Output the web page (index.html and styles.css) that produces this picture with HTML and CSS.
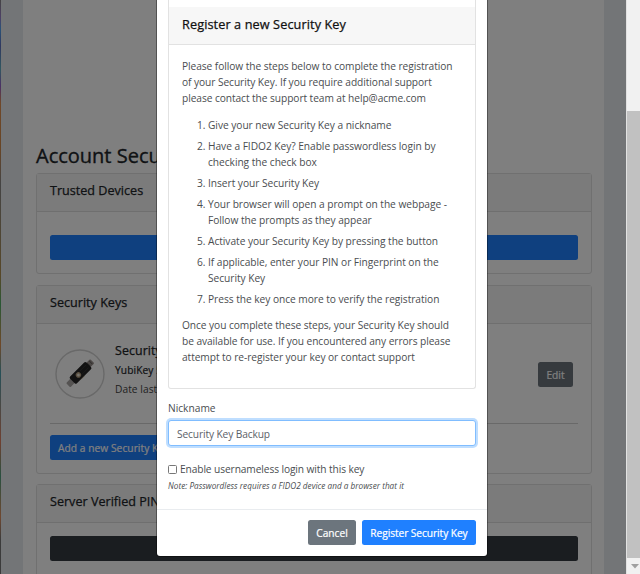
FILE: index.html
```html
<!DOCTYPE html>
<html lang="en">
<head>
<meta charset="utf-8">
<title>Account Security</title>
<link rel="stylesheet" href="styles.css">
</head>
<body>
<div class="window">
  <div class="desktop-edge"></div>
  <div class="page">
    <main class="content">
      <h1>Account Security</h1>
      <section class="card devices">
        <h2 class="card-header">Trusted Devices</h2>
        <div class="card-body"><div class="btn primary wide"></div></div>
      </section>
      <section class="card keys">
        <h2 class="card-header">Security Keys</h2>
        <div class="card-body">
          <div class="key-row">
            <svg class="key-image" viewBox="0 0 50 50">
              <circle cx="25" cy="25" r="24" fill="none" stroke="#d2d2d2" stroke-width="1.4"/>
              <g transform="translate(25.2 24.2) rotate(-45)">
                <rect x="-17" y="-3" width="7" height="6" rx="1" fill="#aaa6a4"/>
                <rect x="10" y="-3" width="7" height="6" rx="1" fill="#99908d"/>
                <path d="M12 -2v4M15 -2v4" stroke="#625e5c" stroke-width="1"/>
                <rect x="-11" y="-4.8" width="23" height="9.6" rx="1.6" fill="#242424"/>
                <path d="M1 -1.8H10M1 2H10" stroke="#393939" stroke-width=".8"/>
                <path d="M-4 4.8H1" stroke="#756345" stroke-width=".8"/>
                <circle cx="-2.5" cy="0" r="2.7" fill="#b6a183"/>
                <circle cx="-2.5" cy="0" r="1.4" fill="#eee9dc"/>
              </g>
            </svg>
            <div class="key-text">
              <h3>Security Key</h3>
              <p class="model">YubiKey 5Ci</p>
              <p class="date">Date last used</p>
            </div>
            <button class="btn secondary edit">Edit</button>
          </div>
          <hr>
          <button class="btn primary add">Add a new Security Key</button>
        </div>
      </section>
      <section class="card pin">
        <h2 class="card-header">Server Verified PIN</h2>
        <div class="card-body"><div class="btn dark wide"></div></div>
      </section>
    </main>
  </div>
  <div class="scrollbar">
    <div class="thumb"></div>
    <svg class="arrow" viewBox="0 0 13 16"><path d="M4 6h8l-4 4.5z" fill="#a0a0a0"/></svg>
  </div>
  <div class="backdrop">
    <div class="modal">
      <div class="modal-body">
        <section class="instructions">
          <h2 class="instructions-header">Register a new Security Key</h2>
          <div class="instructions-body">
            <p>Please follow the steps below to complete the registration<br>of your Security Key. If you require additional support<br>please contact the support team at help@acme.com</p>
            <ol>
              <li>Give your new Security Key a nickname</li>
              <li>Have a FIDO2 Key? Enable passwordless login by<br>checking the check box</li>
              <li>Insert your Security Key</li>
              <li>Your browser will open a prompt on the webpage -<br>Follow the prompts as they appear</li>
              <li>Activate your Security Key by pressing the button</li>
              <li>If applicable, enter your PIN or Fingerprint on the<br>Security Key</li>
              <li>Press the key once more to verify the registration</li>
            </ol>
            <p>Once you complete these steps, your Security Key should<br>be available for use. If you encountered any errors please<br>attempt to re-register your key or contact support</p>
          </div>
        </section>
        <label class="nickname" for="nick">Nickname</label>
        <input id="nick" class="field" type="text" value="Security Key Backup">
        <label class="check"><input type="checkbox"><span>Enable usernameless login with this key</span></label>
        <p class="note">Note: Passwordless requires a FIDO2 device and a browser that it</p>
      </div>
      <div class="modal-footer">
        <button class="btn secondary cancel">Cancel</button>
        <button class="btn primary register">Register Security Key</button>
      </div>
    </div>
  </div>
</div>
</body>
</html>
```
FILE: styles.css
```css
* { box-sizing: border-box; }
html, body { margin: 0; height: 574px; overflow: hidden; }
body { font: 10.2px/16px "Open Sans", "Noto Sans", sans-serif; color: #212529; }
h1, h2, h3, p, ol { margin: 0; font-weight: 400; white-space: nowrap; }
.window { position: relative; display: flex; width: 640px; height: 574px; overflow: hidden; background: #fff; }
.desktop-edge { width: 1px; background: linear-gradient(#888 0, #9a7fcc 3%, #53a4f0 5%, #6070c0 8%, #60b0c0 12%, #9660ca 15%, #e09050 18%, #d08a4a 26%, #888 32%, #b09050 48%, #50b06a 53%, #e09050 60%, #4ba0b0 65%, #e08060 77%, #50a080 83%, #e09060 90%, #777 94%); }
.page { width: 625px; padding: 0 22px; background: #e6eaee; }
.content { width: 581px; height: 574px; padding: 143px 12px 0 13px; background: #fff; overflow: hidden; }
h1 { height: 30px; font-size: 20px; line-height: 26px; -webkit-text-stroke: .35px; }
.card { border: 1px solid #e0e0e0; border-radius: 3px; }
.card-header { height: 38px; padding: 0 13px; border-bottom: 1px solid #dfdfdf; background: #f7f7f7; font-size: 12.6px; line-height: 34px; -webkit-text-stroke: .25px; }
.devices { height: 101px; margin-bottom: 11px; }
.keys { height: 189px; margin-bottom: 10px; }
.pin { height: 120px; }
.card-body { padding: 0 13px; }
.devices .card-body { padding-top: 23px; }
.pin .card-body { padding-top: 13px; }
.btn { display: block; height: 25px; border: 0; border-radius: 2.5px; padding: 0; font: 10.2px/26px "Open Sans", "Noto Sans", sans-serif; color: #fff; white-space: nowrap; -webkit-text-stroke: .2px; }
.primary { background: #1f80ff; }
.secondary { background: #6c757d; }
.dark { background: #343a40; }
.wide { width: 527.5px; }
.key-row { display: flex; height: 99px; padding-top: 17px; }
.key-image { width: 50px; height: 50px; margin: 8px 10px 0 5px; flex: none; }
.key-text { width: 350px; }
.key-text h3 { font-size: 12.4px; line-height: 20px; letter-spacing: .1px; -webkit-text-stroke: .25px; }
.model { line-height: 19px; letter-spacing: .1px; -webkit-text-stroke: .2px; }
.date { line-height: 19px; letter-spacing: .05px; color: #444; }
.edit { width: 35px; margin: 21px 5px 0 auto; }
hr { margin: 0; border: 0; border-top: 1px solid #d2d2d2; }
.add { width: 115px; margin-top: 11px; padding-left: 8px; text-align: left; letter-spacing: .06px; }
.scrollbar { width: 14px; padding-top: 111px; background: #f1f1f1; border-left: 1px solid #e2e2e2; }
.thumb { height: 447px; background: #c1c1c1; }
.arrow { display: block; width: 13px; height: 16px; }
.backdrop { position: absolute; left: 0; top: 0; width: 626px; height: 574px; padding: 0 139px 18px 157px; background: rgba(0, 0, 0, .5); }
.modal { width: 330px; height: 556px; background: #fff; border-radius: 0 0 3px 3px; box-shadow: 0 0 0 1px rgba(0, 0, 0, .35); }
.modal-body { height: 510px; padding: 0 11px; border-bottom: 1px solid #e9ecef; color: #4a4d50; }
.instructions { height: 389px; width: 308px; padding-top: 7px; border: 1px solid #e2e2e2; border-top: 0; border-radius: 0 0 3px 3px; }
.instructions-header { height: 38px; padding-left: 13px; border-bottom: 1px solid #e2e2e2; background: #f7f7f7; color: #111; font-size: 12.7px; letter-spacing: .1px; line-height: 34px; -webkit-text-stroke: .25px; }
.instructions-body { padding: 13px 13px 0; letter-spacing: -.07px; }
ol { margin: 10.5px 0 10px; padding-left: 26px; }
li { margin-bottom: 5px; letter-spacing: -.04px; }
.nickname { display: block; margin-top: 11px; }
.field { display: block; width: 308px; height: 26px; margin-top: 4px; padding: 1px 8px 0; border: 1px solid #80bdff; border-radius: 3px; outline: 0; box-shadow: 0 0 0 2px #bfdeff; font: inherit; letter-spacing: -.12px; color: #5b6168; }
.check { display: flex; align-items: center; height: 16px; margin-top: 15px; font-size: 10.2px; letter-spacing: -.1px; white-space: nowrap; }
.check input { appearance: none; width: 9px; height: 9px; margin: 0 3px 0 0; border: 1px solid #777; border-radius: 1.5px; background: #fff; }
.note { margin-top: 1px; font-size: 8.2px; letter-spacing: .02px; font-style: italic; line-height: 16px; }
.modal-footer { display: flex; justify-content: flex-end; gap: 6px; padding: 10px 11px 0; }
.cancel { width: 48px; }
.register { width: 114px; letter-spacing: -.07px; }
```
